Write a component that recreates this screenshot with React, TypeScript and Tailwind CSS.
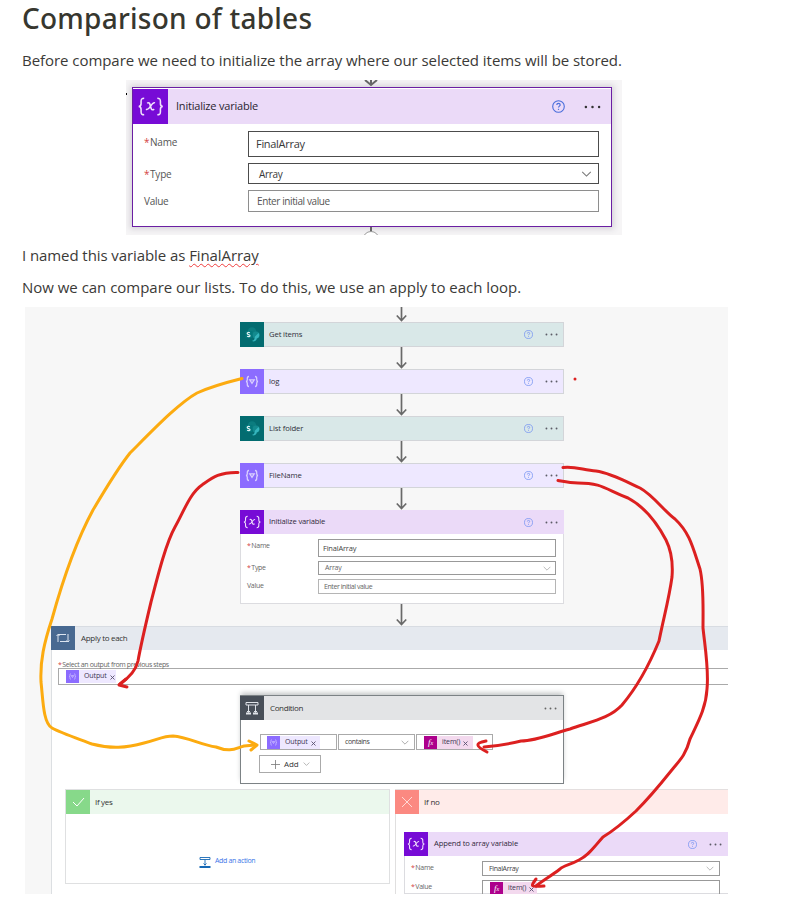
import React from 'react';

function Help({ className }: { className: string }) {
  return (
    <svg viewBox="0 0 13 13" className={className} fill="none" stroke="currentColor">
      <circle cx="6.5" cy="6.5" r="5.8" strokeWidth="1.1" />
      <path d="M4.8 5.1c0-1.1.7-1.7 1.7-1.7s1.7.6 1.7 1.5c0 1.2-1.7 1.3-1.7 2.7" strokeWidth="1.2" />
      <path d="M6.5 8.8v1.1" strokeWidth="1.2" />
    </svg>
  );
}

function Dots({ className }: { className: string }) {
  return (
    <svg viewBox="0 0 18 4" className={className} fill="currentColor">
      <circle cx="2" cy="2" r="1.3" />
      <circle cx="9" cy="2" r="1.3" />
      <circle cx="16" cy="2" r="1.3" />
    </svg>
  );
}

function Chevron({ className }: { className: string }) {
  return (
    <svg viewBox="0 0 12 7" className={className} fill="none" stroke="currentColor" strokeWidth="1.2">
      <path d="M1 1l5 5 5-5" />
    </svg>
  );
}

function VariableIcon({ className }: { className: string }) {
  return (
    <svg viewBox="0 0 36 36" className={className} fill="none" stroke="#f0e2fb" strokeWidth="1.6">
      <path d="M11.500 9.500c-3 0-3.200 1-3.200 3.200v2.500c0 1.800-.6 2.600-2.400 2.800 1.800.2 2.400 1 2.400 2.800v2.500c0 2.200.2 3.200 3.200 3.200M25 9.500c3 0 3.200 1 3.200 3.200v2.500c0 1.800.6 2.600 2.400 2.800-1.800.2-2.400 1-2.400 2.800v2.500c0 2.200-.2 3.200-3.200 3.200" />
      <path d="M14.500 14.500c2.200-1.200 2.800.2 3.500 3.200.8 3.300 1.500 4.800 3.800 2.900M22.600 14.300c-1.800-.8-3 1-4.500 3.400-1.600 2.600-2.700 4.200-4.800 3.100" />
    </svg>
  );
}

function ComposeIcon({ className }: { className: string }) {
  return (
    <svg viewBox="0 0 24 24" className={className} fill="none" stroke="#d9ceff" strokeWidth="1.300">
      <path d="M9 7c-1.500 0-1.700.7-1.700 2v1.200c0 1.200-.4 1.700-1.300 1.800.9.1 1.300.6 1.300 1.800V15c0 1.300.2 2 1.700 2M15 7c1.500 0 1.700.7 1.700 2v1.200c0 1.200.4 1.700 1.300 1.800-.9.1-1.300.6-1.300 1.800V15c0 1.300-.2 2-1.700 2" />
      <path d="M9.800 10.400h4.400L12 13.800z" />
    </svg>
  );
}

function SharePointIcon({ className }: { className: string }) {
  return (
    <svg viewBox="0 0 24 24" className={className}>
      <circle cx="12" cy="9" r="4.300" fill="#0b7c7f" />
      <circle cx="16" cy="12.500" r="3.600" fill="#138a8e" />
      <path d="M18.500 10.500c1.500 2 .8 4.800-1.800 5.500-.2 2.500-2.600 3.600-4.700 2.400 2.800-.6 2.500-2.600 3-4.400z" fill="#35b5bd" />
      <rect x="5.500" y="8.500" width="7" height="7" rx=".6" fill="#03787c" />
      <path d="M9.900 10.300c-1.300-.7-2.700-.4-2.700.7 0 1.300 2.800.9 2.800 2.200 0 1.100-1.500 1.300-2.900.6" fill="none" stroke="#e2f3f3" strokeWidth="1.200" />
    </svg>
  );
}

function Arrow({ className }: { className: string }) {
  return (
    <div className={`ml-[371px] w-[11px] overflow-hidden ${className}`}>
      <svg viewBox="0 0 11 22" className="block h-[22px] w-[11px] shrink-0" fill="none" stroke="#696969" strokeWidth="1.700">
        <path d="M5.500 0v20.500M.800 15.500l4.700 5 4.700-5" />
      </svg>
    </div>
  );
}

function Step({ title, kind }: { title: string; kind: 'sp' | 'compose' }) {
  const sp = kind === 'sp';
  return (
    <div className={`ml-[215px] flex h-[25px] w-[324px] items-center shadow-[inset_0_0_0_1px_#d3d5d9] ${sp ? 'bg-[#d9e8e8]' : 'bg-[#eee8ff]'}`}>
      <div className={`h-[25px] w-6 shrink-0 ${sp ? 'bg-[#036c70]' : 'bg-[#8c6cff]'}`}>
        {sp ? <SharePointIcon className="h-[25px] w-6" /> : <ComposeIcon className="h-[25px] w-6" />}
      </div>
      <span className="ml-[5px] flex-1 text-[7.700px] tracking-[-0.130px] text-[#30303a]">{title}</span>
      <Help className="mr-[12px] h-[9px] w-[9px] text-[#7391f2]" />
      <Dots className="mr-[6px] h-[3px] w-[13px] text-[#5c5c66]" />
    </div>
  );
}

function Req() {
  return <span className="mr-[1px] tracking-[-0.500px] text-[#d33f3f]">*</span>;
}

function Token({ label, fx, className }: { label: string; fx?: boolean; className: string }) {
  return (
    <div className={`flex h-[13px] items-center text-[7px] tracking-[-0.100px] text-[#3a3550] ${fx ? 'bg-[#f3d9ee]' : 'bg-[#eee8ff]'} ${className}`}>
      <div className={`flex h-[13px] w-[13px] shrink-0 items-center justify-center ${fx ? 'bg-[#ad008c]' : 'bg-[#8c6cff]'}`}>
        {fx ? <i className="font-['Liberation_Serif',serif] text-[9px] leading-none text-white">f<span className="text-[6px]">x</span></i> : <ComposeIcon className="h-[13px] w-[13px]" />}
      </div>
      <span className="ml-[5px]">{label}</span>
      <svg viewBox="0 0 5 5" className="ml-[3px] mt-[2px] h-[5px] w-[5px]" stroke="#57506e" strokeWidth=".9"><path d="M.500.500l4 4M4.500.500l-4 4" /></svg>
    </div>
  );
}

function FirstPicture() {
  return (
    <div className="relative ml-[126px] mt-[9px] h-[155px] w-[496px] overflow-hidden bg-[#f6f5f6] pl-[6px] pt-[7px]">
      <svg viewBox="0 0 16 7" className="absolute left-[237px] top-0 h-[7px] w-[16px]" fill="none" stroke="#666" strokeWidth="2"><path d="M2 0l6 5 6-5M8 0v5" /></svg>
      <svg viewBox="0 0 20 8" className="absolute left-[235px] top-[147px] h-[8px] w-[20px]" fill="#fff" stroke="#999"><path d="M10 0v5" strokeWidth="2" stroke="#666" /><circle cx="10" cy="12.500" r="8" /></svg>
      <div className="absolute left-0 top-[13px] h-[2px] w-[1px] bg-black" />
      <div className="h-[140px] w-[480px] border border-[#6b1fa3] bg-white pt-px shadow-[0_0_6px_2px_#d5d2d8]">
        <div className="flex h-[35px] items-center bg-[#ebdaf8]">
          <div className="h-[35px] w-[35px] bg-[#770bd6]"><VariableIcon className="h-[35px] w-[35px]" /></div>
          <span className="ml-[8px] flex-1 text-[11px] tracking-[-0.200px] text-[#2a2530]">Initialize variable</span>
          <Help className="mr-[19px] h-[13px] w-[13px] text-[#4a6edb]" />
          <Dots className="mr-[10px] h-[4px] w-[17px] text-[#333]" />
        </div>
        <div className="pl-[11px] pr-[12px] pt-[7px] text-[10px] text-[#555]">
          <div className="flex h-[26px]">
            <span className="w-[104px] leading-[22px] tracking-[-0.200px]"><Req />Name</span>
            <div className="flex flex-1 items-center border border-[#4c4c4c] pl-[7px] text-[11px] tracking-[-0.300px] text-[#383838]">FinalArray</div>
          </div>
          <div className="mt-[6px] flex h-[21px]">
            <span className="w-[104px] leading-[22px] tracking-[-0.200px]"><Req />Type</span>
            <div className="flex flex-1 items-center border border-[#4c4c4c] pl-[10px] pr-[6px] tracking-[-0.350px] text-[#383838]"><span className="flex-1 pt-px">Array</span><Chevron className="h-[6px] w-[11px] text-[#777]" /></div>
          </div>
          <div className="mt-[6px] flex h-[22px]">
            <span className="w-[104px] leading-[22px] tracking-[-0.300px]">Value</span>
            <div className="flex flex-1 items-center border border-[#8e8e8e] pl-[8px] tracking-[-0.400px] text-[#555]"><span className="pt-px">Enter initial value</span></div>
          </div>
        </div>
      </div>
    </div>
  );
}

function SmallVariable() {
  return (
    <div className="ml-[215px] h-[94px] w-[324px] bg-white text-[7px] text-[#666] shadow-[inset_0_0_0_1px_#dcdce0]">
      <div className="flex h-6 items-center bg-[#ebdaf8]">
        <VariableIcon className="h-6 w-6 bg-[#770bd6]" />
        <span className="ml-[5px] flex-1 text-[7.600px] tracking-[-0.160px] text-[#30283a]">Initialize variable</span>
        <Help className="mr-[12px] h-[9px] w-[9px] text-[#7391f2]" />
        <Dots className="mr-[6px] h-[3px] w-[13px] text-[#5c5c66]" />
      </div>
      <div className="pl-[7px] pr-[8px] pt-[5px] tracking-[-0.200px]">
        <div className="flex h-[18px]">
          <span className="w-[71px] leading-[14px] tracking-[-0.300px]"><Req />Name</span>
          <div className="flex flex-1 items-center border border-[#999] pl-[4px] text-[7.500px] text-[#444]"><span className="pt-px">FinalArray</span></div>
        </div>
        <div className="mt-[4px] flex h-[14px]">
          <span className="w-[71px] leading-[13px] tracking-[-0.300px]"><Req />Type</span>
          <div className="flex flex-1 items-center border border-[#999] pl-[6px] pr-[4px]"><span className="flex-1 pt-px">Array</span><Chevron className="h-[5px] w-[8px] text-[#aaa]" /></div>
        </div>
        <div className="mt-[4px] flex h-[15px]">
          <span className="w-[71px] leading-[13px] tracking-[-0.300px]">Value</span>
          <div className="flex flex-1 items-center border border-[#b5b5b5] pl-[5px] tracking-[-0.420px]"><span className="pt-px">Enter initial value</span></div>
        </div>
      </div>
    </div>
  );
}

function Condition() {
  return (
    <div className="ml-[188px] mt-[10px] h-[89px] w-[324px] border border-[#7c8285] bg-white shadow-[0_-3px_5px_-1px_#bfc2c3]">
      <div className="flex h-6 items-center bg-[#e3e4e6]">
        <svg viewBox="0 0 24 24" className="-ml-px h-6 w-6 bg-[#484f58]" fill="none" stroke="#dfe3e8">
          <path d="M6 6.500h12v2.500H6zM8.500 9v7M15.500 9v7" />
          <path d="M6 17.500h5M13 17.500h5" strokeWidth="2" /><path d="M7 15l1.500 1.500L10 15M14 15l1.500 1.500L17 15" />
        </svg>
        <span className="ml-[6px] flex-1 text-[8px] tracking-[-0.370px] text-[#333]">Condition</span>
        <Dots className="mr-[6px] h-[3px] w-[13px] text-[#666]" />
      </div>
      <div className="ml-[19px] mt-[14px] flex h-[16px] gap-px text-[7px] text-[#666]">
        <div className="flex w-[77px] items-center border border-[#aaa] pl-[6px]"><Token label="Output" className="w-[53px]" /></div>
        <div className="flex w-[77px] items-center border border-[#aaa] pl-[6px] pr-[5px]"><span className="flex-1 tracking-[-0.400px] text-[#444]">contains</span><Chevron className="h-[5px] w-[8px] text-[#999]" /></div>
        <div className="flex w-[77px] items-center border border-[#aaa] pl-[7px]"><Token label="item()" fx className="w-[49px]" /></div>
      </div>
      <div className="ml-[18px] mt-[5px] flex h-[18px] w-[62px] items-center border border-[#aaa] pl-[11px] text-[8px] tracking-[-0.100px] text-[#333]">
        <svg viewBox="0 0 9 9" className="mr-[4px] h-[9px] w-[9px]" stroke="#777" strokeWidth=".8"><path d="M4.500 0v9M0 4.500h9" /></svg>
        Add
        <Chevron className="ml-[4px] h-[4px] w-[7px] text-[#999]" />
      </div>
    </div>
  );
}

function Branches() {
  return (
    <div className="ml-[13px] mt-[5px] flex h-[110px] gap-[5px]">
      <div className="h-[95px] w-[325px] shrink-0 border border-[#dfe0e1] bg-white">
        <div className="flex h-6 items-center bg-[#ebf8ed] text-[8px] text-[#333]">
          <svg viewBox="0 0 24 24" className="mr-[5px] h-6 w-6 bg-[#87d98a]" fill="none" stroke="#fff"><path d="M7 12l4 4 7-8" /></svg>
          <span className="tracking-[-0.300px]">If yes</span>
        </div>
        <div className="ml-[133px] mt-[41px] flex h-[13px] items-center text-[7px] tracking-[-0.350px] text-[#3b76e8]">
          <svg viewBox="0 0 12 12" className="mr-[4px] h-[12px] w-[12px]" fill="none" stroke="#1769b5"><path d="M1 1.500h10v2H1zM6 3.500v6M4.500 7.500L6 9l1.500-1.500" strokeWidth=".9" /><path d="M.500 11h11" strokeWidth="2" /></svg>
          Add an action
        </div>
      </div>
      <div className="min-w-0 flex-1 border-t border-[#e4dfdf] bg-white shadow-[inset_1px_0_0_#e0dfdf]">
        <div className="flex h-6 items-center bg-[#ffebe9] text-[8px] text-[#333]">
          <svg viewBox="0 0 24 24" className="mr-[5px] h-6 w-6 bg-[#fb8981]" fill="none" stroke="#ffd9d5"><path d="M7 7l10 10M17 7L7 17" /></svg>
          <span className="tracking-[-0.200px]">If no</span>
        </div>
        <div className="ml-[9px] mt-[18px] h-[62px] w-[325px] bg-white text-[7px] text-[#666] shadow-[inset_0_0_0_1px_#dcdce0]">
          <div className="flex h-6 items-center bg-[#ebdaf8]">
            <VariableIcon className="h-6 w-6 bg-[#770bd6]" />
            <span className="ml-[6px] flex-1 text-[7.600px] tracking-[-0.140px] text-[#30283a]">Append to array variable</span>
            <Help className="mr-[12px] h-[9px] w-[9px] text-[#7391f2]" />
            <Dots className="mr-[7px] h-[3px] w-[13px] text-[#5c5c66]" />
          </div>
          <div className="pl-[7px] pr-[9px] pt-[5px] tracking-[-0.200px]">
            <div className="flex h-[15px]">
              <span className="w-[71px] leading-[13px] tracking-[-0.300px]"><Req />Name</span>
              <div className="flex flex-1 items-center border border-[#999] pl-[6px] pr-[5px] tracking-[-0.350px] text-[#444]"><span className="flex-1 pt-px">FinalArray</span><Chevron className="h-[5px] w-[8px] text-[#aaa]" /></div>
            </div>
            <div className="mt-[4px] flex h-[16px]">
              <span className="w-[71px] leading-[13px] tracking-[-0.300px]"><Req />Value</span>
              <div className="flex flex-1 items-center border border-[#999] pl-[7px]"><Token label="item()" fx className="w-[47px]" /></div>
            </div>
          </div>
        </div>
      </div>
    </div>
  );
}

function Ink() {
  return (
    <svg viewBox="25 307 703 587" className="absolute left-0 top-0 h-[587px] w-[703px]" fill="none" strokeLinecap="round" strokeLinejoin="round" strokeWidth="3">
      <g stroke="#fcab10">
        <path d="M242 378.500C228 382 210 387 197 393C179 403 155 428 130 453C118 468 106 488 93 510C74 545 60 590 52 619C44 643 40 661 41 682C43 699 43 723 52 728C61 733 79 739 92 744C111 749 126 748 144 743C157 740 163 736 173 736C188 737 201 745 216 747C231 753 236 748 244 746L255 745" />
        <path d="M249 741l8 4-6 5" />
      </g>
      <g stroke="#dc2020">
        <path d="M238 472.500C219 472 212 478 202 485C190 493 183 513 175 527C166 543 158 575 151 602C146 623 141 644 138 661C136 670 130 677 120 684" />
        <path d="M126 679l-7 6 8 2" />
        <path d="M558 480.500C566 482 570 483 578 483C602 483 605 489 628 498C643 506 656 521 666 540C672 552 673 564 672 577C669 599 664 616 659 641C650 663 638 686 622 705C610 718 593 721 570 729C552 734 536 741 521 741C509 744 496 746 484 747" />
        <path d="M486 741c-11 2-11 5 1 11" />
        <path d="M563 467.500C575 466 583 470 596 471C611 473 629 483 640 488C653 495 665 512 675 519C690 533 693 548 700 569C704 586 703 608 703 628C705 647 709 670 707 689C706 708 698 722 690 739C686 754 681 759 671 771C659 786 646 801 636 811C623 823 613 831 603 837C593 848 589 855 579 860C570 865 564 865 560 869C551 876 542 881 536 886" />
        <path d="M536 879c-6 8-5 8 8 7" />
      </g>
      <circle cx="575" cy="379" r="1.500" fill="#dc2020" />
    </svg>
  );
}

export default function App() {
  return (
    <main className="h-[905px] w-[787px] overflow-hidden bg-white font-['Open_Sans','Noto_Sans',sans-serif] text-[#3b3a37]">
      <h1 className="ml-[22px] h-[40px] whitespace-nowrap font-['Noto_Sans',sans-serif] text-[28px] font-medium leading-[36px] tracking-[0.240px] text-[#37372f]">Comparison of tables</h1>
      <p className="ml-[22px] mt-[10px] h-[21px] whitespace-nowrap text-[15px] leading-[21px] tracking-[-0.050px]">Before compare we need to initialize the array where our selected items will be stored.</p>
      <FirstPicture />
      <p className="ml-[22px] mt-[10px] h-[21px] whitespace-nowrap text-[15px] leading-[21px] tracking-[-0.080px]">I named this variable as <span className="underline decoration-[#ef3c3c] decoration-wavy decoration-[1px] underline-offset-[2px]">FinalArray</span></p>
      <p className="ml-[22px] mt-[11px] h-[21px] whitespace-nowrap text-[15px] leading-[21px] tracking-[-0.020px]">Now we can compare our lists. To do this, we use an apply to each loop.</p>
      <section className="relative ml-[25px] mt-[9px] h-[587px] w-[703px] overflow-hidden whitespace-nowrap bg-[#f7f7f7]">
        <Arrow className="flex h-[15px] items-end" />
        <Step title="Get items" kind="sp" />
        <Arrow className="h-[22px]" />
        <Step title="log" kind="compose" />
        <Arrow className="h-[22px]" />
        <Step title="List folder" kind="sp" />
        <Arrow className="h-[22px]" />
        <Step title="FileName" kind="compose" />
        <Arrow className="h-[22px]" />
        <SmallVariable />
        <Arrow className="h-[22px]" />
        <div className="ml-[26px] h-[268px] border-l border-[#dcdfe2] bg-white">
          <div className="flex h-6 items-center bg-[#e5e9ef] shadow-[inset_0_1px_0_#d8dce2]">
            <svg viewBox="0 0 24 24" className="-ml-px h-6 w-6 bg-[#486991]" fill="none" stroke="#dce5f0"><path d="M7 16V8.500h8M17 8v7.500H9M5.500 10L7 8.500 8.500 10M15.500 14.500L17 16l1.500-1.500" /></svg>
            <span className="ml-[6px] text-[8px] tracking-[-0.300px] text-[#333]">Apply to each</span>
          </div>
          <div className="ml-[6px] mt-[10px] h-[8px] text-[7px] leading-[9px] tracking-[-0.380px] text-[#666]"><Req />Select an output from previous steps</div>
          <div className="ml-[6px] flex h-[17px] items-center border-y border-l border-[#aaa] pl-[7px]"><Token label="Output" className="w-[50px]" /></div>
          <Condition />
          <Branches />
        </div>
        <Ink />
      </section>
    </main>
  );
}
